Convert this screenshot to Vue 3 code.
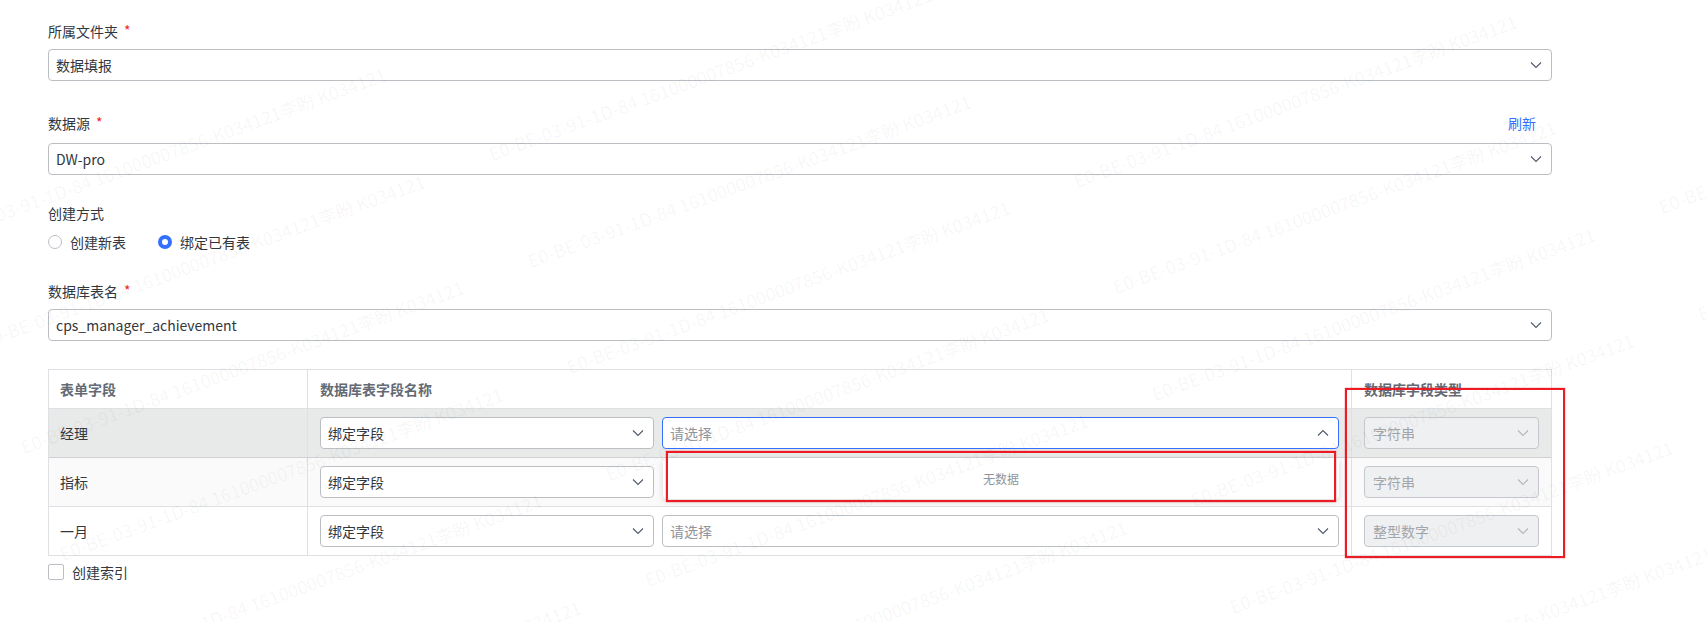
<script setup>
const marks = []
for (let i = -3; i < 5; i++) {
  for (let j = -3; j < 9; j++) {
    const x = 385 + i * 585 + j * 39
    const y = 73 + i * 26.6 + j * 106.5
    if (x > -20 && x < 2180 && y > -20 && y < 800) {
      marks.push({ key: i + '_' + j, right: 1707 - x + 'px', top: y - 13 + 'px' })
    }
  }
}
const rows = [
  { name: '经理', cls: 'hover', open: true, type: '字符串' },
  { name: '指标', cls: 'alt', open: false, type: '字符串', covered: true },
  { name: '一月', cls: '', open: false, type: '整型数字' }
]
</script>

<template>
  <div class="page">
    <div class="field">
      <div class="label"><span>所属文件夹</span><i>*</i></div>
      <div class="select"><span>数据填报</span><svg class="arrow" viewBox="0 0 12 8"><path d="M1 1.5 6 6.5 11 1.5" /></svg></div>
    </div>
    <div class="field f2">
      <div class="label"><span>数据源</span><i>*</i><a>刷新</a></div>
      <div class="select"><span>DW-pro</span><svg class="arrow" viewBox="0 0 12 8"><path d="M1 1.5 6 6.5 11 1.5" /></svg></div>
    </div>
    <div class="field f3">
      <div class="label"><span>创建方式</span></div>
      <div class="radios">
        <label class="radio"><b class="dot"></b>创建新表</label>
        <label class="radio on"><b class="dot"></b>绑定已有表</label>
      </div>
    </div>
    <div class="field f4">
      <div class="label"><span>数据库表名</span><i>*</i></div>
      <div class="select"><span>cps_manager_achievement</span><svg class="arrow" viewBox="0 0 12 8"><path d="M1 1.5 6 6.5 11 1.5" /></svg></div>
    </div>
    <div class="table">
      <div class="tr head">
        <div class="c1">表单字段</div>
        <div class="c2">数据库表字段名称</div>
        <div class="c3">数据库字段类型</div>
      </div>
      <div v-for="r in rows" :key="r.name" class="tr" :class="r.cls">
        <div class="c1">{{ r.name }}</div>
        <div class="c2 pair">
          <div class="select bind"><span>绑定字段</span><svg class="arrow" viewBox="0 0 12 8"><path d="M1 1.5 6 6.5 11 1.5" /></svg></div>
          <div v-if="r.covered" class="slot"></div>
          <div v-else class="select grow" :class="{ focus: r.open }">
            <span class="ph">请选择</span>
            <svg class="arrow" viewBox="0 0 12 8"><path :d="r.open ? 'M1 6.5 6 1.5 11 6.5' : 'M1 1.5 6 6.5 11 1.5'" /></svg>
          </div>
          <div v-if="r.open" class="panel">无数据</div>
        </div>
        <div class="c3">
          <div class="select disabled"><span>{{ r.type }}</span><svg class="arrow" viewBox="0 0 12 8"><path d="M1 1.5 6 6.5 11 1.5" /></svg></div>
        </div>
      </div>
    </div>
    <label class="check"><b></b>创建索引</label>

    <div class="redbox r1"></div>
    <div class="redbox r2"></div>
    <div class="marks">
      <span v-for="m in marks" :key="m.key" class="mark" :style="{ right: m.right, top: m.top }">E0-BE-03-91-1D-84 161000007856-K034121李盼 K034121</span>
    </div>
  </div>
</template>

<style>
html, body { margin: 0; background: #fff; overflow: hidden; }
</style>

<style scoped>
.page {
  position: relative;
  width: 1707px;
  height: 622px;
  overflow: hidden;
  box-sizing: border-box;
  padding: 20px 155px 0 48px;
  font-family: "Noto Sans CJK SC", "Noto Sans", sans-serif;
  font-size: 14px;
  color: #33373d;
  background: #fff;
}
.field { display: flex; flex-direction: column; }
.f2 { margin-top: 31px; }
.f2 .label { margin-bottom: 9px; }
.f3 { margin-top: 27px; }
.f4 { margin-top: 27px; }
.label {
  display: flex;
  align-items: center;
  height: 22px;
  margin-bottom: 7px;
}
.label i {
  color: #f5222d;
  font-style: normal;
  margin-left: 6px;
  position: relative;
  top: -1px;
}
.label a {
  margin-left: auto;
  margin-right: 16px;
  color: #3370ff;
}
.select {
  display: flex;
  align-items: center;
  justify-content: space-between;
  box-sizing: border-box;
  height: 32px;
  padding: 0 8px 0 7px;
  border: 1px solid #bbbfc4;
  border-radius: 4px;
  background: #fff;
}
.arrow {
  width: 12px;
  height: 8px;
  margin-right: 1px;
  flex: none;
}
.arrow path {
  fill: none;
  stroke: #4e5969;
  stroke-width: 1.1;
}
.radios { display: flex; gap: 32px; height: 22px; align-items: center; }
.radio { display: flex; align-items: center; gap: 8px; }
.dot {
  box-sizing: border-box;
  width: 14px;
  height: 14px;
  border: 1px solid #bbbfc4;
  border-radius: 50%;
  background: #fff;
}
.on .dot { border: 4.5px solid #3370ff; }
.table {
  margin-top: 28px;
  width: 1504px;
  box-sizing: border-box;
  border: 1px solid #dee0e3;
  border-bottom: 0;
}
.tr {
  display: grid;
  grid-template-columns: 258px 1044px 200px;
  height: 49px;
  border-bottom: 1px solid #dee0e3;
  box-sizing: border-box;
  align-items: stretch;
}
.tr.head {
  height: 39px;
  font-weight: 700;
  color: #646a73;
}
.tr.hover { background: #e8e9e9; border-bottom-color: #cfd1d4; }
.tr.alt { background: #fafafa; }
.tr > div { display: flex; align-items: center; padding-left: 12px; box-sizing: border-box; }
.tr > .c1 { padding-left: 11px; }
.c2, .c3 { border-left: 1px solid #dee0e3; }
.c3 { padding-right: 12px; }
.pair { position: relative; gap: 8px; padding-right: 12px; }
.bind { flex: 0 0 334px; }
.grow { flex: 1; }
.slot { flex: 1; }
.focus { border-color: #3370ff; }
.ph { color: #8f959e; }
.disabled { width: 175px; padding-left: 8px; background: #eff0f1; border-color: #c4c7cb; color: #a2a6ac; }
.disabled .arrow path { stroke: #b3b6bb; }
.panel {
  position: absolute;
  left: 355px;
  right: 12px;
  top: 49px;
  height: 41px;
  display: flex;
  align-items: center;
  justify-content: center;
  background: #fff;
  border-radius: 4px;
  box-shadow: 0 2px 6px rgba(0, 0, 0, .14);
  font-size: 12px;
  color: #8f959e;
  z-index: 2;
}
.check { display: flex; align-items: center; gap: 8px; height: 22px; margin-top: 5px; }
.check b {
  box-sizing: border-box;
  width: 16px;
  height: 16px;
  border: 1px solid #bbbfc4;
  border-radius: 2px;
  background: #fff;
}
.redbox {
  position: absolute;
  box-sizing: border-box;
  border: 2px solid #ed1c24;
  box-shadow: 0 0 1px #ed1c24;
  z-index: 3;
}
.r1 { left: 666px; top: 451px; width: 670px; height: 51px; }
.r2 { left: 1345px; top: 388px; width: 220px; height: 170px; }
.marks { position: absolute; inset: 0; pointer-events: none; z-index: 4; }
.mark {
  position: absolute;
  white-space: nowrap;
  font-size: 18px;
  line-height: 26px;
  color: rgba(0, 0, 0, .045);
  transform: rotate(-20deg);
  transform-origin: 100% 50%;
}
</style>
